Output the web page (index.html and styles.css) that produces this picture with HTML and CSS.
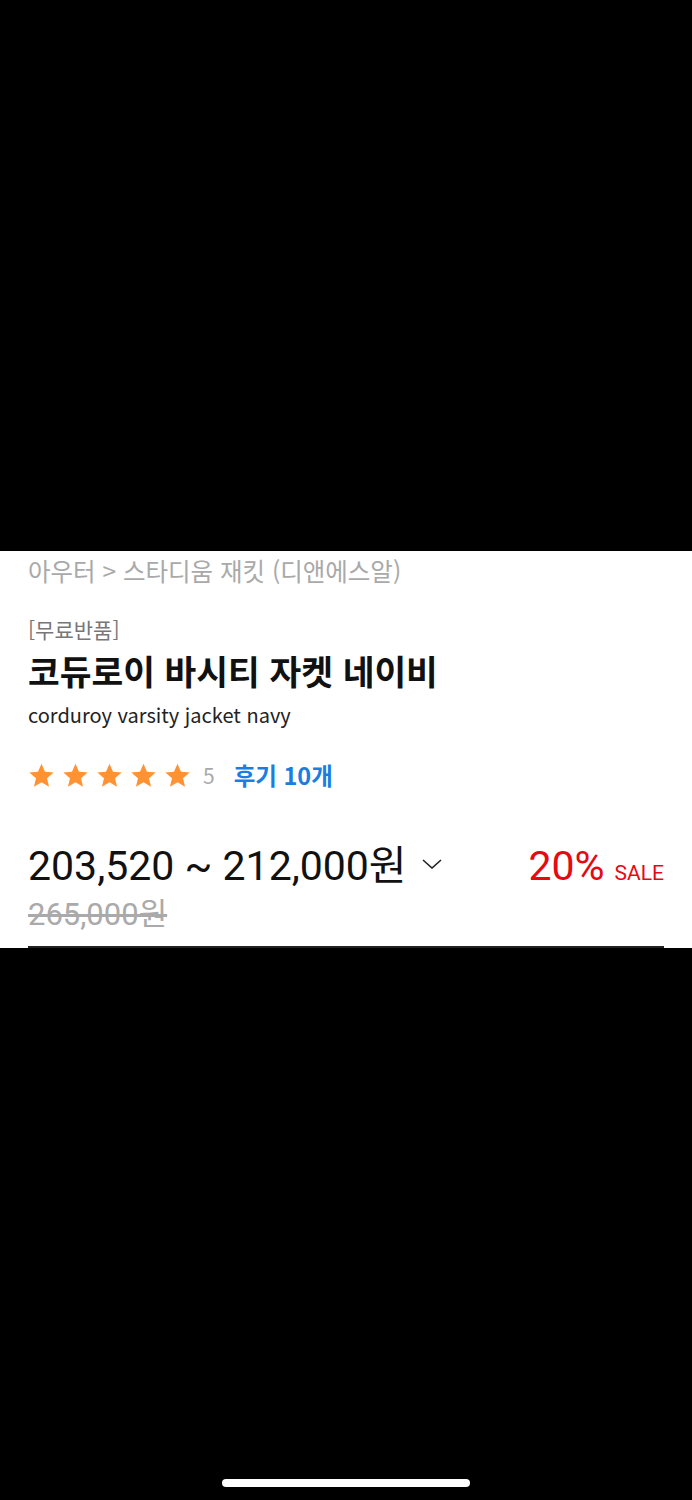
FILE: index.html
```html
<!DOCTYPE html>
<html lang="ko">
<head>
    <meta charset="UTF-8">
    <meta name="viewport" content="width=device-width, initial-scale=1.0">
    <title>코듀로이 바시티 자켓 네이비</title>
    <link rel="stylesheet" href="styles.css">
</head>
<body>
    <div class="screen">
        <section class="product">
            <p class="crumbs">아우터 &gt; 스타디움 재킷 (디앤에스알)</p>
            <p class="tag">[무료반품]</p>
            <h1 class="title">코듀로이 바시티 자켓 네이비</h1>
            <p class="subtitle">corduroy varsity jacket navy</p>
            <div class="rating">
                <div class="stars">
                    <svg viewBox="0 0 24 24"><path d="M12 1.5l3.1 7.2 7.7.6-5.9 5.1 1.8 7.6L12 18l-6.7 4 1.8-7.6-5.9-5.1 7.7-.6z"/></svg>
                    <svg viewBox="0 0 24 24"><path d="M12 1.5l3.1 7.2 7.7.6-5.9 5.1 1.8 7.6L12 18l-6.7 4 1.8-7.6-5.9-5.1 7.7-.6z"/></svg>
                    <svg viewBox="0 0 24 24"><path d="M12 1.5l3.1 7.2 7.7.6-5.9 5.1 1.8 7.6L12 18l-6.7 4 1.8-7.6-5.9-5.1 7.7-.6z"/></svg>
                    <svg viewBox="0 0 24 24"><path d="M12 1.5l3.1 7.2 7.7.6-5.9 5.1 1.8 7.6L12 18l-6.7 4 1.8-7.6-5.9-5.1 7.7-.6z"/></svg>
                    <svg viewBox="0 0 24 24"><path d="M12 1.5l3.1 7.2 7.7.6-5.9 5.1 1.8 7.6L12 18l-6.7 4 1.8-7.6-5.9-5.1 7.7-.6z"/></svg>
                </div>
                <span class="score">5</span>
                <a href="#" class="reviews">후기 10개</a>
            </div>
            <div class="price-row">
                <div class="price">
                    <span>203,520 ~ 212,000원</span>
                    <svg class="chevron" viewBox="0 0 20 10"><path d="M1 1l9 8 9-8"/></svg>
                </div>
                <div class="sale"><strong>20%</strong> <span>SALE</span></div>
            </div>
            <p class="original">265,000원</p>
            <div class="rule"></div>
        </section>
        <div class="home-bar"></div>
    </div>
</body>
</html>
```

FILE: styles.css
```css
body {
    margin: 0;
    background-color: #000;
    font-family: "Noto Sans CJK KR", "Noto Sans", sans-serif;
}

.screen {
    height: 1500px;
    display: flex;
    flex-direction: column;
    padding-top: 551px;
    box-sizing: border-box;
}

.product {
    background-color: #fff;
    padding: 0 28px;
    height: 397px;
    box-sizing: border-box;
}

.product p {
    margin: 0;
}

.crumbs {
    color: #a9a9a9;
    font-size: 24.5px;
    line-height: 40px;
}

.product .tag {
    color: #777;
    font-size: 21px;
    line-height: 28px;
    margin-top: 24px;
}

.title {
    margin: 5px 0 0;
    font-size: 34.5px;
    line-height: 44px;
    font-weight: 700;
    color: #111;
}

.product .subtitle {
    color: #222;
    font-size: 20px;
    line-height: 28px;
    margin-top: 9px;
}

.rating {
    display: flex;
    align-items: center;
    margin-top: 31px;
    height: 30px;
}

.stars {
    display: flex;
    gap: 7px;
}

.stars svg {
    width: 27px;
    height: 27px;
    fill: #ff9233;
}

.score {
    color: #a9a9a9;
    font-size: 21px;
    margin-left: 12px;
}

.reviews {
    color: #1a7de0;
    font-size: 23.5px;
    font-weight: 700;
    text-decoration: none;
    margin-left: 19px;
}

.price-row {
    display: flex;
    justify-content: space-between;
    align-items: center;
    margin-top: 51px;
    height: 50px;
}

.price {
    display: flex;
    align-items: center;
    font-family: Roboto, "Noto Sans CJK KR", sans-serif;
    font-size: 41px;
    color: #111;
    line-height: 50px;
}

.chevron {
    width: 20px;
    height: 10px;
    margin-left: 15px;
    margin-bottom: 4px;
    fill: none;
    stroke: #222;
    stroke-width: 1.6;
}

.sale {
    color: #e50914;
    font-family: Roboto, "Noto Sans CJK KR", sans-serif;
}

.sale strong {
    font-size: 41px;
    font-weight: 400;
}

.sale span {
    font-size: 21px;
    margin-left: 6px;
}

.product .original {
    font-family: Roboto, "Noto Sans CJK KR", sans-serif;
    color: #aaa;
    font-size: 31px;
    line-height: 34px;
    text-decoration: line-through;
    margin-top: 7px;
}

.rule {
    height: 2px;
    background-color: #222;
    margin-top: 14px;
}

.home-bar {
    width: 248px;
    height: 8px;
    border-radius: 4px;
    background-color: #fff;
    margin: auto auto 13px;
}
```
